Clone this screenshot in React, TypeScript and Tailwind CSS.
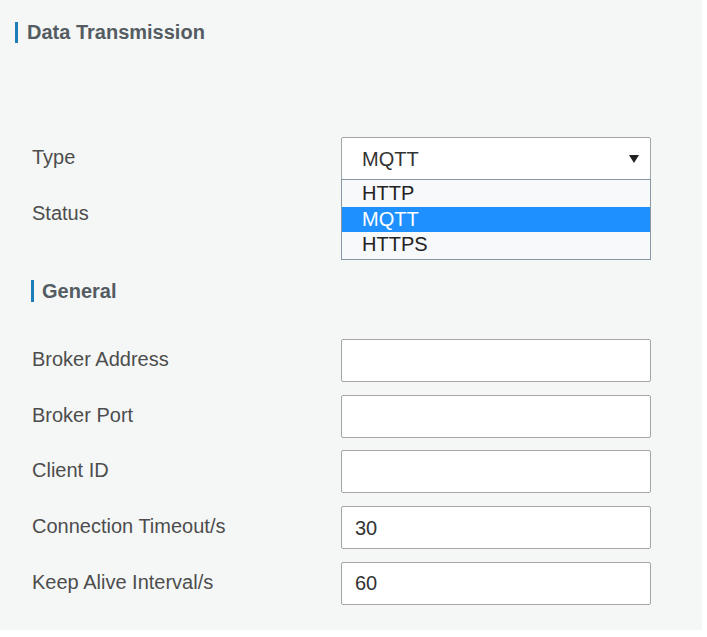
import React from "react";

const font = { fontFamily: '"Liberation Sans", Arial, sans-serif' };

function Row({ label, children }: { label: string; children?: React.ReactNode }) {
  return (
    <div className="flex h-[43px] items-center">
      <div className="w-[341px] pb-[3px] pl-[32px] text-[20px] text-[#4d4d4d]">{label}</div>
      <div className="relative h-full w-[310px]">{children}</div>
    </div>
  );
}

function Input({ value }: { value?: string }) {
  return (
    <div className="flex h-full w-full items-center rounded-[2px] border border-[#a6a6a6] bg-white pl-[13px] text-[20px] text-[#333]">
      {value}
    </div>
  );
}

export default function App() {
  return (
    <div className="h-[637px] w-[707px] bg-white" style={font}>
      <div className="flex h-[630px] w-[702px] flex-col bg-[#f5f7f7] pt-[22px]">
        <div className="flex h-[21px] items-center gap-[9px] pl-[15px]">
          <div className="h-full w-[3px] bg-[#1c7db8]" />
          <div className="pb-[1px] text-[20px] font-bold text-[#545c62]">Data Transmission</div>
        </div>

        <div className="mt-[94px] flex flex-col gap-[13px]">
          <Row label="Type">
            <div className="flex h-full w-full items-center justify-between rounded-[2px] border border-[#a6a6a6] bg-white pl-[20px] pr-[11px] text-[20px] text-[#333]">
              <span>MQTT</span>
              <svg width="10" height="8" viewBox="0 0 10 8">
                <polygon points="0,0 10,0 5,8" fill="#222" />
              </svg>
            </div>
            <div className="absolute left-0 top-[42px] z-10 w-full border border-[#8797a6] bg-[#f7f9fa] py-[1px] text-[20px] leading-[25.5px] text-[#222]">
              <div className="pl-[20px]">HTTP</div>
              <div className="bg-[#1e90ff] pl-[20px] text-white">MQTT</div>
              <div className="pl-[20px]">HTTPS</div>
            </div>
          </Row>
          <Row label="Status">
            <Input />
          </Row>
        </div>

        <div className="mt-[44px] flex h-[22px] items-center gap-[8px] pl-[31px]">
          <div className="h-full w-[3px] bg-[#1c7db8]" />
          <div className="pb-[1px] text-[20px] font-bold text-[#545c62]">General</div>
        </div>

        <div className="mt-[37px] flex flex-col gap-[12.7px]">
          <Row label="Broker Address">
            <Input />
          </Row>
          <Row label="Broker Port">
            <Input />
          </Row>
          <Row label="Client ID">
            <Input />
          </Row>
          <Row label="Connection Timeout/s">
            <Input value="30" />
          </Row>
          <Row label="Keep Alive Interval/s">
            <Input value="60" />
          </Row>
        </div>
      </div>
    </div>
  );
}
